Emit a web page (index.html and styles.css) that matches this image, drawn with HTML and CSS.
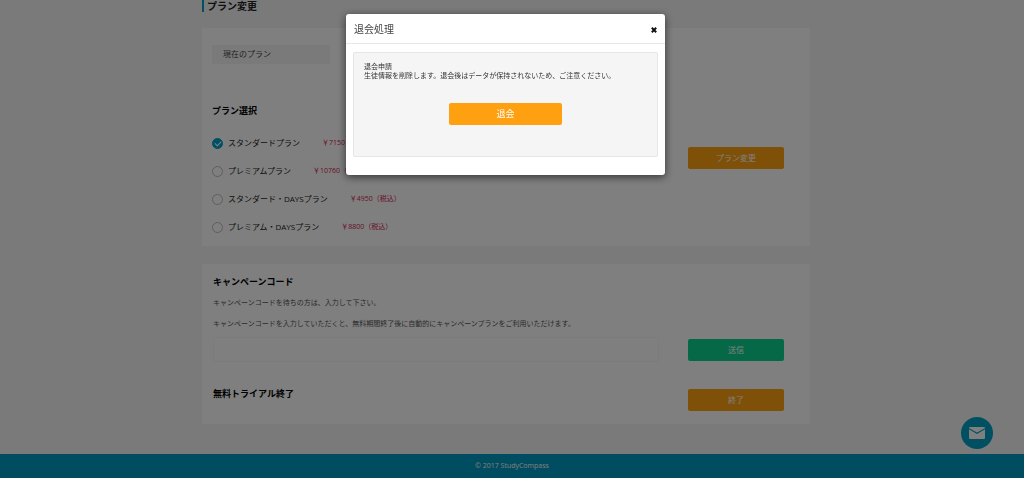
FILE: index.html
```html
<!DOCTYPE html>
<html lang="ja">
<head>
<meta charset="utf-8">
<meta name="viewport" content="width=device-width, initial-scale=1">
<title>プラン変更 | StudyCompass</title>
<link rel="stylesheet" href="styles.css">
</head>
<body>
<main class="page">
  <div class="container">
    <h1 class="page-title">プラン変更</h1>

    <section class="card">
      <p class="current-plan">現在のプラン</p>
      <h2 class="heading plan-heading">プラン選択</h2>
      <form class="row">
        <div class="plans">
          <label class="plan"><input class="radio" type="radio" name="plan" checked><span class="plan-name">スタンダードプラン</span><span class="price">￥7150（税込）</span></label>
          <label class="plan"><input class="radio" type="radio" name="plan"><span class="plan-name">プレミアムプラン</span><span class="price">￥10760（税込）</span></label>
          <label class="plan"><input class="radio" type="radio" name="plan"><span class="plan-name">スタンダード・DAYSプラン</span><span class="price">￥4950（税込）</span></label>
          <label class="plan"><input class="radio" type="radio" name="plan"><span class="plan-name">プレミアム・DAYSプラン</span><span class="price">￥8800（税込）</span></label>
        </div>
        <button class="btn plan-btn" type="button">プラン変更</button>
      </form>
    </section>

    <section class="card campaign">
      <h2 class="heading"><label for="code">キャンペーンコード</label></h2>
      <p class="note">キャンペーンコードを待ちの方は、入力して下さい。</p>
      <p class="note">キャンペーンコードを入力していただくと、無料期間終了後に自動的にキャンペーンプランをご利用いただけます。</p>
      <form class="row code-row">
        <input class="code" id="code" type="text">
        <button class="btn btn-green" type="button">送信</button>
      </form>
      <div class="row trial-row">
        <h2 class="heading">無料トライアル終了</h2>
        <button class="btn trial-btn" type="button">終了</button>
      </div>
    </section>
  </div>
</main>

<footer class="footer">© 2017 StudyCompass</footer>

<button class="mail" type="button" aria-label="お問い合わせ">
  <svg width="16" height="12" viewBox="0 0 16 12" aria-hidden="true">
    <rect width="16" height="12" rx="1" fill="#fff"/>
    <path d="M0 1.6 8 6.3l8-4.7" fill="none" stroke="#00a0c4" stroke-width="1.1"/>
  </svg>
</button>

<div class="overlay">
  <div class="modal" role="dialog" aria-modal="true" aria-labelledby="modal-title">
    <header class="modal-header">
      <h2 class="modal-title" id="modal-title">退会処理</h2>
      <button class="close" type="button" aria-label="閉じる">
        <svg width="6" height="6" viewBox="0 0 6 6" aria-hidden="true"><path d="M.8.8l4.4 4.4M5.2.8.8 5.2" stroke="#111" stroke-width="2"/></svg>
      </button>
    </header>
    <div class="panel">
      <p class="panel-text">退会申請<br>生徒情報を削除します。退会後はデータが保持されないため、ご注意ください。</p>
      <button class="btn btn-leave" type="button">退会</button>
    </div>
  </div>
</div>
</body>
</html>
```
FILE: styles.css
```css
* {
  box-sizing: border-box;
}

body {
  display: flex;
  flex-direction: column;
  min-height: 100vh;
  margin: 0;
  background: #f5f5f7;
  color: #222;
  font: 8px/12px "Open Sans", "Noto Sans CJK JP", sans-serif;
}

h1, h2, p {
  margin: 0;
}

button, input {
  font: inherit;
}

.page {
  flex: 1;
  padding: 0 12px 22px 0;
}

.container {
  max-width: 608px;
  margin: 0 auto;
}

.page-title {
  margin-bottom: 16px;
  padding-left: 3px;
  border-left: 2px solid #00a0c4;
  font-size: 10px;
  line-height: 12px;
}

.card {
  padding: 17px 26px 5px 10px;
  background: #fff;
}

.current-plan {
  width: 118px;
  padding: 3px 11px 4px;
  background: #f4f4f4;
  color: #444;
}

.heading {
  color: #000;
  font-size: 9px;
  line-height: 12px;
}

.plan-heading {
  margin: 41px 0 12px;
}

.row {
  display: flex;
  justify-content: space-between;
  align-items: flex-start;
}

.plan {
  display: flex;
  align-items: center;
  height: 28px;
}

.radio {
  appearance: none;
  display: grid;
  place-items: center;
  width: 11px;
  height: 11px;
  margin: 0 5px 0 0;
  border: 1px solid #bbb;
  border-radius: 50%;
}

.radio:checked {
  border-color: #00a0c4;
  background: #00a0c4;
}

.radio:checked::after {
  content: "";
  width: 5px;
  height: 3px;
  margin-bottom: 1px;
  border: solid #fff;
  border-width: 0 0 1px 1px;
  transform: rotate(-45deg);
}

.price {
  margin-left: 22px;
  color: #d0224e;
  font-size: 7px;
}

.btn {
  flex: none;
  width: 96px;
  height: 22px;
  padding: 0;
  border: 0;
  border-radius: 2px;
  background: #ffa010;
  color: #fff;
}

.plan-btn {
  margin-top: 18px;
}

.btn-green {
  background: #0bd18d;
}

.campaign {
  margin-top: 18px;
  padding: 12px 26px 13px 11px;
}

.note {
  margin-top: 9px;
  color: #555;
  font-size: 7px;
}

.code-row {
  align-items: center;
  gap: 29px;
  margin-top: 7px;
}

.code {
  flex: 1;
  height: 25px;
  padding: 0 8px;
  border: 1px solid #f6f6f6;
  border-radius: 2px;
  background: #fff;
}

.trial-row {
  margin-top: 26px;
}

.trial-btn {
  margin-top: 1px;
}

.footer {
  padding: 6px 0;
  background: #0099c0;
  color: #fff;
  font-family: "Open Sans", sans-serif;
  font-size: 7px;
  text-align: center;
}

.mail {
  position: fixed;
  right: 31px;
  bottom: 29px;
  display: grid;
  place-items: center;
  width: 32px;
  height: 32px;
  padding: 0;
  border: 0;
  border-radius: 50%;
  background: #00a0c4;
}

.overlay {
  position: fixed;
  inset: 0;
  display: flex;
  justify-content: center;
  align-items: flex-start;
  padding: 14px 13px 0 0;
  background: rgba(0, 0, 0, 0.5);
}

.modal {
  width: 319px;
  padding-bottom: 18px;
  border-radius: 3px;
  background: #fff;
  box-shadow: 0 2px 8px rgba(0, 0, 0, 0.6);
}

.modal-header {
  display: flex;
  justify-content: space-between;
  align-items: center;
  height: 30px;
  padding: 0 8px;
  border-bottom: 1px solid #e8e8e8;
}

.modal-title {
  color: #444;
  font-size: 10px;
  font-weight: 400;
}

.close {
  display: grid;
  padding: 3px 0 0;
  border: 0;
  background: none;
}

.panel {
  margin: 8px 7px 0;
  padding: 9px 10px 31px;
  border: 1px solid #e6e6e6;
  border-radius: 2px;
  background: #f5f5f5;
}

.panel-text {
  color: #333;
  font-size: 7px;
  line-height: 9px;
}

.btn-leave {
  display: block;
  width: 113px;
  margin: 23px auto 0;
  font-size: 9px;
}
```
